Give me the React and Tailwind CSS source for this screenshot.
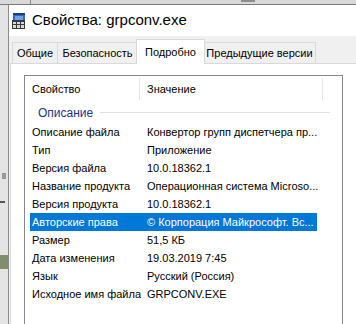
const rows = [
  ["Описание файла", "Конвертор групп диспетчера пр..."],
  ["Тип", "Приложение"],
  ["Версия файла", "10.0.18362.1"],
  ["Название продукта", "Операционная система Microso..."],
  ["Версия продукта", "10.0.18362.1"],
  ["Авторские права", "© Корпорация Майкрософт. Вс...", true],
  ["Размер", "51,5 КБ"],
  ["Дата изменения", "19.03.2019 7:45"],
  ["Язык", "Русский (Россия)"],
  ["Исходное имя файла", "GRPCONV.EXE"],
];

const AppIcon = () => (
  <svg width="14" height="17" viewBox="0 0 14 17">
    <rect x="1" y="1" width="12" height="8" fill="#2f6fbf" />
    <rect x="1" y="1" width="12" height="2" fill="#1b3f7a" />
    <rect x="3" y="4" width="8" height="4" fill="#6aa3e6" />
    <rect x="0" y="8" width="13" height="9" fill="#3a3a3a" />
    <rect x="1" y="10" width="3" height="2" fill="#d8d8d8" />
    <rect x="5" y="10" width="3" height="2" fill="#d8d8d8" />
    <rect x="9" y="10" width="3" height="2" fill="#d8d8d8" />
    <rect x="1" y="13" width="3" height="3" fill="#d8d8d8" />
    <rect x="5" y="13" width="3" height="3" fill="#d8d8d8" />
    <rect x="9" y="13" width="3" height="3" fill="#d8d8d8" />
  </svg>
);

const tabs = [
  { label: "Общие", w: "w-[46px]" },
  { label: "Безопасность", w: "w-[81px]" },
  { label: "Подробно", w: "w-[69px]", active: true },
  { label: "Предыдущие версии", w: "w-[113px]" },
];

export default function App() {
  return (
    <div className="w-[356px] h-[324px] overflow-hidden flex flex-col bg-white text-[11px] text-black font-['Liberation_Sans',Arial,sans-serif]">
      <div className="h-[5px] shrink-0 bg-[#d9d9d9] border-b border-[#7a7a7a] flex">
        <div className="w-[30px]" />
        <div className="w-px bg-[#8a8a8a]" />
        <div className="w-[210px]" />
        <div className="w-[14px] h-[2px] bg-[#8c8c8c]" />
      </div>
      <div className="flex flex-1 min-h-0">
        <div className="w-[9px] shrink-0 bg-[#e4e4e4] border-r border-[#8a8a8a] flex flex-col">
          <div className="h-[168px]" />
          <div className="w-[4px] h-[6px] bg-[#9a9a9a] ml-[2px]" />
          <div className="h-[22px]" />
          <div className="w-[5px] h-[2px] bg-[#555]" />
          <div className="h-[52px]" />
          <div className="w-[8px] h-[14px] bg-[#7e8f6a]" />
        </div>
        <div className="flex flex-col w-[360px] shrink-0 bg-[#f0f0f0]">
          <div className="h-[31px] shrink-0 bg-white flex items-center pl-[3px] gap-[6px]">
            <AppIcon />
            <span className="text-[15px] text-black">Свойства: grpconv.exe</span>
          </div>
          <div className="h-[27px] shrink-0 flex items-end pl-[3px]">
            {tabs.map((t) =>
              t.active ? (
                <div
                  key={t.label}
                  className={`${t.w} h-[25px] shrink-0 -ml-[2px] -mr-[1px] -mb-px relative z-10 bg-white border border-b-0 border-[#d9d9d9] flex items-center justify-center whitespace-nowrap`}
                >
                  {t.label}
                </div>
              ) : (
                <div
                  key={t.label}
                  className={`${t.w} h-[21px] shrink-0 -ml-px first:ml-0 bg-[#f0f0f0] border border-b-0 border-[#d9d9d9] flex items-center justify-center whitespace-nowrap`}
                >
                  {t.label}
                </div>
              )
            )}
          </div>
          <div className="flex-1 ml-px bg-white border border-[#d9d9d9] pt-[11px] pl-[13px]">
            <div className="w-[319px] h-[300px] border border-[#828790] bg-white">
              <div className="h-[26px] flex items-stretch">
                <div className="w-[114px] shrink-0 pl-[7px] flex items-center">Свойство</div>
                <div className="w-px bg-[#e5e5e5] my-[2px]" />
                <div className="w-[182px] shrink-0 pl-[7px] flex items-center">Значение</div>
                <div className="w-px bg-[#e5e5e5] my-[2px]" />
              </div>
              <div className="h-[21px] flex items-center pl-[13px]">
                <span className="text-[12px] text-[#1e3287]">Описание</span>
                <div className="w-[230px] h-px bg-[#e2e2e2] ml-[7px]" />
              </div>
              {rows.map(([k, v, sel]) => (
                <div
                  key={k}
                  className={`h-[18px] w-[287px] ml-[5px] flex items-center ${sel ? "bg-[#0078d7] text-white" : ""}`}
                >
                  <div className="w-[117px] shrink-0 pl-[2px] whitespace-nowrap">{k}</div>
                  <div className="whitespace-nowrap">{v}</div>
                </div>
              ))}
            </div>
          </div>
        </div>
      </div>
    </div>
  );
}
